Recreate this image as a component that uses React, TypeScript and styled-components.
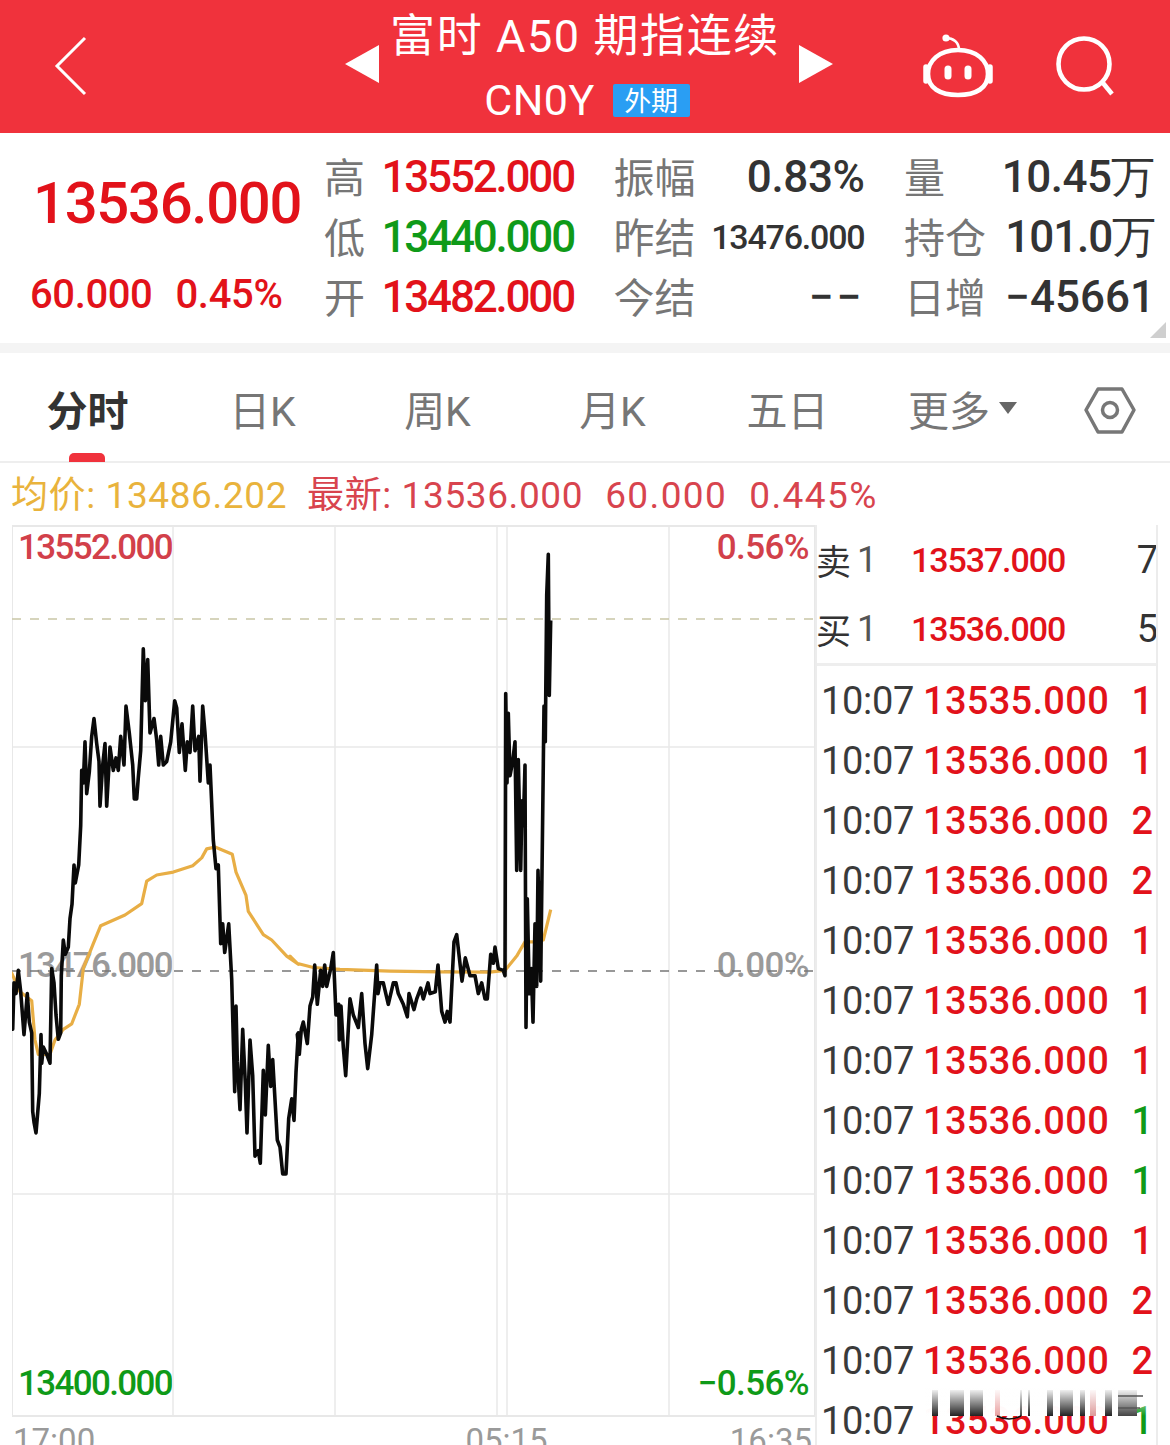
import React from "react";
import styled, { createGlobalStyle } from "styled-components";

const GlobalStyle = createGlobalStyle`
  html, body { margin: 0; padding: 0; background: #fff; width: 1170px; height: 1445px; overflow: hidden; }
  body { font-family: Roboto, "Noto Sans CJK SC", sans-serif; }
  #root { width: 1170px; height: 1445px; overflow: hidden; }
`;

const RED = "#e2121a";
const GREEN = "#0f9a18";
const CJK = `Roboto, "Noto Sans CJK SC", sans-serif`;

const Page = styled.div`
  width: 1170px;
  height: 1445px;
  overflow: hidden;
  background: #fff;
  position: relative;
`;

/* ---------- header ---------- */
const Header = styled.header`
  height: 133px;
  background: #f0323c;
  color: #fff;
  display: flex;
  align-items: flex-start;
`;
const BackIcon = styled.svg`
  width: 34px;
  height: 60px;
  margin: 36px 257px 0 54px;
  flex: none;
`;
const Arrow = styled.div<{ $dir: "left" | "right" }>`
  width: 0;
  height: 0;
  flex: none;
  margin-top: 45px;
  border-top: 19px solid transparent;
  border-bottom: 19px solid transparent;
  ${(p) => (p.$dir === "left" ? "border-right: 34px solid #fff;" : "border-left: 34px solid #fff;")}
`;
const TitleBlock = styled.div`
  width: 420px;
  flex: none;
  display: flex;
  flex-direction: column;
  align-items: center;
`;
const Title = styled.div`
  font-family: ${CJK};
  font-weight: 400;
  font-size: 45px;
  line-height: 70px;
  letter-spacing: 1.6px;
  white-space: pre;
  margin: 2px 8px -2px 0;
`;
const SubRow = styled.div`
  display: flex;
  align-items: center;
  gap: 18px;
  height: 60px;
  margin-right: 4px;
`;
const Code = styled.span`
  font-size: 43px;
  font-weight: 400;
  letter-spacing: 0.4px;
`;
const Badge = styled.span`
  width: 77px;
  height: 33px;
  background: #2a9ef3;
  border-radius: 2px;
  font-family: "Noto Sans CJK SC", sans-serif;
  font-size: 27px;
  font-weight: 400;
  line-height: 32px;
  text-align: center;
`;
const RobotIcon = styled.svg`
  width: 74px;
  height: 70px;
  margin: 30px 0 0 88px;
  flex: none;
`;
const SearchIcon = styled.svg`
  width: 64px;
  height: 64px;
  margin: 34px 0 0 61px;
  flex: none;
`;

/* ---------- stats ---------- */
const Stats = styled.section`
  height: 210px;
  display: flex;
  position: relative;
`;
const PriceBlock = styled.div`
  width: 325px;
  flex: none;
  display: flex;
  flex-direction: column;
`;
const Num = styled.span<{ $size: number; $color?: string; $ls?: number; $w?: number }>`
  font-family: Roboto, sans-serif;
  font-size: ${(p) => p.$size}px;
  color: ${(p) => p.$color ?? "#333"};
  letter-spacing: ${(p) => p.$ls ?? 0}px;
  font-weight: ${(p) => p.$w ?? 400};
  white-space: nowrap;
`;
const BigPrice = styled.div`
  height: 70px;
  line-height: 70px;
  margin: 35px 0 0 33px;
`;
const ChangeRow = styled.div`
  display: flex;
  gap: 23px;
  height: 60px;
  line-height: 60px;
  margin: 27px 0 0 30px;
`;
const StatGrid = styled.div`
  display: grid;
  grid-template-columns: 249px 250px 250px;
  grid-auto-rows: 60px;
  column-gap: 40.5px;
  padding-top: 14px;
`;
const Cell = styled.div`
  display: flex;
  justify-content: space-between;
  align-items: center;
`;
const Label = styled.span`
  font-family: "Noto Sans CJK SC", sans-serif;
  font-size: 41px;
  line-height: 60px;
  margin: -4px 0 0 -1px;
  font-weight: 400;
  color: #767676;
  white-space: nowrap;
`;
const Corner = styled.div`
  position: absolute;
  right: 4px;
  bottom: 5px;
  width: 0;
  height: 0;
  border-left: 16px solid transparent;
  border-bottom: 16px solid #cfcfcf;
`;
const Band = styled.div`
  height: 10px;
  background: #f4f4f4;
`;

/* ---------- tabs ---------- */
const Tabs = styled.nav`
  height: 108px;
  display: flex;
  border-bottom: 2px solid #eeeeee;
`;
const Tab = styled.div<{ $active?: boolean }>`
  width: 175px;
  flex: none;
  position: relative;
  display: flex;
  justify-content: center;
  align-items: center;
  height: 110px;
  font-family: ${CJK};
  font-size: 41px;
  font-weight: ${(p) => (p.$active ? 700 : 400)};
  color: ${(p) => (p.$active ? "#333" : "#767676")};
  &::after {
    content: "";
    display: ${(p) => (p.$active ? "block" : "none")};
    position: absolute;
    left: 69px;
    bottom: 1px;
    width: 36px;
    height: 9px;
    border-radius: 5px 5px 0 0;
    background: #f0323c;
  }
`;
const Caret = styled.i`
  width: 0;
  height: 0;
  margin: 0 0 0 9px;
  border-left: 9px solid transparent;
  border-right: 9px solid transparent;
  border-top: 12px solid #666;
`;
const HexIcon = styled.svg`
  width: 54px;
  height: 50px;
  margin: 33px 0 0 33px;
  flex: none;
`;

/* ---------- legend ---------- */
const Legend = styled.div`
  height: 62px;
  display: flex;
  align-items: baseline;
  padding: 9px 0 0 11px;
  box-sizing: border-box;
  font-family: ${CJK};
  font-size: 37px;
  line-height: 48px;
  font-weight: 400;
  white-space: pre;
`;
const LegendItem = styled.span<{ $color: string; $gap?: number; $ls?: number }>`
  color: ${(p) => p.$color};
  margin-left: ${(p) => p.$gap ?? 0}px;
  letter-spacing: ${(p) => p.$ls ?? 0.6}px;
`;

/* ---------- main ---------- */
const Main = styled.div`
  display: flex;
  align-items: flex-start;
`;
const ChartColumn = styled.div`
  width: 815px;
  flex: none;
`;
const ChartBox = styled.div`
  position: relative;
  width: 803px;
  height: 892px;
  margin-left: 12px;
`;
const ChartSvg = styled.svg`
  display: block;
  position: relative;
  z-index: 1;
`;
const ChartLabel = styled.span<{
  $color: string;
  $top: number;
  $left?: number;
  $right?: number;
}>`
  position: absolute;
  top: ${(p) => p.$top}px;
  ${(p) => (p.$left !== undefined ? `left: ${p.$left}px;` : "")}
  ${(p) => (p.$right !== undefined ? `right: ${p.$right}px;` : "")}
  color: ${(p) => p.$color};
  font-size: 35px;
  font-weight: 500;
  line-height: 40px;
  letter-spacing: ${(p) => (p.$left !== undefined ? -1.65 : -0.6)}px;
  z-index: 0;
`;
const Axis = styled.div`
  display: flex;
  justify-content: space-between;
  padding: 0 3px 0 13px;
  height: 28px;
  font-size: 33px;
  line-height: 48px;
  color: #9a9a9a;
  font-weight: 400;
`;
const AxisMid = styled.span`
  margin-left: 188px;
`;

const Side = styled.aside`
  width: 343px;
  flex: none;
  box-sizing: border-box;
  height: 920px;
  border-left: 2px solid #ececec;
  border-right: 2px solid #ececec;
  overflow: hidden;
`;
const QuoteBox = styled.div`
  height: 138px;
  border-bottom: 3px solid #eeeeee;
`;
const Quote = styled.div`
  height: 69px;
  display: flex;
  align-items: center;
  margin: 0 -2px 0 -1px;
`;
const QuoteLabel = styled.span`
  width: 95px;
  flex: none;
  display: flex;
  align-items: center;
  gap: 6px;
  font-family: "Noto Sans CJK SC", sans-serif;
  font-size: 35px;
  font-weight: 400;
  color: #333;
`;
const QuoteIndex = styled.span`
  font-family: Roboto, sans-serif;
  font-weight: 400;
  font-size: 36px;
  color: #555;
`;
const QuotePrice = styled(Num)`
  flex: 1;
`;
const TickList = styled.div`
  padding-top: 5px;
`;
const Tick = styled.div`
  height: 60px;
  display: flex;
  align-items: center;
  padding: 0 3px 0 4px;
  font-size: 38px;
  font-weight: 500;
  white-space: nowrap;
`;
const TickTime = styled.span`
  width: 102px;
  flex: none;
  color: #3a3a3a;
  font-weight: 400;
  letter-spacing: -0.3px;
`;
const TickPrice = styled.span`
  flex: 1;
  color: ${RED};
  letter-spacing: 0.3px;
`;
const TickQty = styled.span<{ $up: boolean }>`
  color: ${(p) => (p.$up ? RED : GREEN)};
`;
const Watermark = styled.svg`
  position: absolute;
  left: 925px;
  top: 1386px;
  z-index: 3;
  filter: blur(0.6px);
`;

/* ---------- data ---------- */
type P = [number, number];
const z3 = (a: P[]) => a.map(([x, y]) => [x / 3, 640 + y / 2.8] as P);
const z4 = (a: P[]) => a.map(([x, y]) => [290 + x / 3, 540 + y / 2.8] as P);
const toPts = (a: P[]) => a.map(([x, y]) => `${x.toFixed(1)},${y.toFixed(1)}`).join(" ");

const blackA: P[] = [[34,1000],[38,1090],[42,960],[48,990],[55,925],[62,985],[72,1105],[82,990],[88,1070],[95,1100],[98,1320],[102,1350],[108,1380],[118,1270],[123,1105],[125,1185],[130,1140],[140,1160],[150,1185],[155,920],[162,960],[168,1050],[175,1118],[182,1100],[184,940],[190,840],[196,880],[205,860],[210,780],[216,740],[222,630],[226,680],[236,630],[242,520],[245,365],[250,400],[255,285],[260,430],[268,370],[275,270],[282,220],[290,290],[297,340],[300,465],[308,350],[315,290],[320,465],[330,300],[340,365],[348,330],[355,365],[362,270],[372,350],[378,185],[388,260],[398,350],[403,445],[410,445],[415,385],[422,310],[430,25],[436,170],[443,55],[450,260],[462,220],[470,280],[476,350],[482,270],[490,350],[500,340],[512,285],[524,170],[530,190],[538,315],[546,235],[556,365],[562,285],[570,315],[578,185],[585,310],[596,270],[600,395],[608,185],[615,260],[625,400],[630,350],[640,560],[648,640],[655,630],[662,850],[668,795],[674,875],[686,795],[695,950],[704,1265],[708,1025],[712,1180],[720,1315],[728,1090],[736,1240],[741,1380],[750,1120],[758,1220],[765,1445],[775,1430],[781,1465],[790,1205],[796,1330],[805,1135],[812,1250],[818,1175],[832,1400],[840,1420],[848,1495],[858,1495],[866,1340],[875,1285],[882,1345],[888,1210],[895,1100]];
const blackB: P[] = [[22,1385],[28,1440],[34,1370],[40,1350],[52,1410],[60,1305],[68,1280],[74,1190],[82,1300],[92,1205],[98,1250],[104,1190],[110,1250],[122,1200],[130,1155],[138,1330],[146,1300],[148,1400],[153,1305],[160,1420],[167,1500],[180,1285],[190,1330],[205,1365],[215,1270],[225,1410],[233,1480],[245,1385],[260,1190],[264,1270],[270,1240],[280,1240],[295,1300],[310,1240],[318,1240],[325,1270],[340,1300],[352,1335],[357,1270],[372,1315],[380,1285],[392,1255],[400,1285],[414,1240],[420,1270],[436,1265],[444,1190],[455,1320],[465,1350],[472,1320],[480,1350],[492,1125],[500,1105],[516,1235],[526,1170],[540,1220],[555,1220],[565,1270],[575,1240],[585,1285],[592,1285],[602,1160],[610,1185],[615,1140],[625,1200],[640,1205],[645,1220],[647,430],[651,680],[655,485],[660,660],[668,620],[675,565],[680,925],[685,615],[692,925],[696,730],[700,800],[705,630],[708,1365],[712,1005],[718,1270],[724,1200],[729,1350],[735,1075],[740,1250],[744,925],[752,1235],[762,465],[766,565],[770,155],[775,40],[778,435],[782,225]];
const goldA: P[] = [[34,930],[60,985],[95,1010],[105,1120],[115,1160],[150,1160],[165,1120],[190,1090],[215,1075],[238,1020],[250,920],[280,850],[302,800],[375,770],[425,738],[440,675],[470,658],[520,650],[578,632],[605,610],[620,585],[645,580],[697,600],[708,650],[738,715],[745,760],[790,825],[815,840],[860,885],[895,908]];
const goldB: P[] = [[0,1165],[20,1185],[70,1197],[150,1202],[300,1207],[450,1209],[600,1210],[645,1205],[680,1165],[705,1125],[730,1125],[760,1120],[782,1035]];
const blackPts = toPts([...z3(blackA), ...z4(blackB)]);
const goldPts = toPts([...z3(goldA), ...z4(goldB)]);

const VLINES = [173, 335, 497, 507, 669];
const HLINES = [747, 1194];
const ROWS: { price: string; qty: string; up: boolean }[] = [
  { price: "13535.000", qty: "1", up: true },
  { price: "13536.000", qty: "1", up: true },
  { price: "13536.000", qty: "2", up: true },
  { price: "13536.000", qty: "2", up: true },
  { price: "13536.000", qty: "1", up: true },
  { price: "13536.000", qty: "1", up: true },
  { price: "13536.000", qty: "1", up: true },
  { price: "13536.000", qty: "1", up: false },
  { price: "13536.000", qty: "1", up: false },
  { price: "13536.000", qty: "1", up: true },
  { price: "13536.000", qty: "2", up: true },
  { price: "13536.000", qty: "2", up: true },
  { price: "13536.000", qty: "1", up: false },
];

const BARS: [number, number, string][] = [
  [7, 6, "#222"], [25, 14, "#222"], [45, 13, "#222"], [70, 5, "#e9a0a0"], [95, 2, "#444"],
  [103, 2, "#222"], [122, 6, "#222"], [135, 13, "#222"], [155, 5, "#222"], [165, 6, "#d99"],
  [180, 7, "#222"], [193, 19, "#444"],
];

export default function App() {
  return (
    <Page>
      <GlobalStyle />
      <Header>
        <BackIcon viewBox="0 0 34 60">
          <path d="M31 2 L3 30 L31 58" fill="none" stroke="#fff" strokeWidth="3" />
        </BackIcon>
        <Arrow $dir="left" />
        <TitleBlock>
          <Title>富时 A50 期指连续</Title>
          <SubRow>
            <Code>CN0Y</Code>
            <Badge>外期</Badge>
          </SubRow>
        </TitleBlock>
        <Arrow $dir="right" />
        <RobotIcon viewBox="0 0 74 70">
          <circle cx="25" cy="8" r="3.6" fill="#fff" />
          <path d="M25 8 C32 8 38 12 38 20" fill="none" stroke="#fff" strokeWidth="2.6" />
          <path d="M37 20 C56 20 67 31 67 44 C67 58 55 65 37 65 C19 65 7 58 7 44 C7 31 18 20 37 20 Z" fill="none" stroke="#fff" strokeWidth="4.6" />
          <path d="M5 37 V51 M69 37 V51" fill="none" stroke="#fff" strokeWidth="5.5" strokeLinecap="round" />
          <rect x="23.5" y="35.5" width="7" height="14" rx="3.5" fill="#fff" />
          <rect x="43.5" y="35.5" width="7" height="14" rx="3.5" fill="#fff" />
        </RobotIcon>
        <SearchIcon viewBox="0 0 64 64">
          <circle cx="28" cy="30" r="25.5" fill="none" stroke="#fff" strokeWidth="4.6" />
          <path d="M47 49 L56 60" fill="none" stroke="#fff" strokeWidth="4.6" />
        </SearchIcon>
      </Header>

      <Stats>
        <PriceBlock>
          <BigPrice>
            <Num $size={58} $color={RED} $ls={-1.3} $w={500}>13536.000</Num>
          </BigPrice>
          <ChangeRow>
            <Num $size={40} $color={RED} $ls={-0.4} $w={500}>60.000</Num>
            <Num $size={40} $color={RED} $ls={-0.3} $w={500}>0.45%</Num>
          </ChangeRow>
        </PriceBlock>
        <StatGrid>
          <Cell><Label>高</Label><Num $size={44} $color={RED} $ls={-2.2} $w={500}>13552.000</Num></Cell>
          <Cell><Label>振幅</Label><Num $size={44} $ls={-0.4} $w={500}>0.83%</Num></Cell>
          <Cell><Label>量</Label><Num $size={44} $ls={-0.5} $w={500}>10.45万</Num></Cell>
          <Cell><Label>低</Label><Num $size={44} $color={GREEN} $ls={-2.2} $w={500}>13440.000</Num></Cell>
          <Cell><Label>昨结</Label><Num $size={34} $ls={-1.2} $w={500}>13476.000</Num></Cell>
          <Cell><Label>持仓</Label><Num $size={44} $ls={-1.1} $w={500}>101.0万</Num></Cell>
          <Cell><Label>开</Label><Num $size={44} $color={RED} $ls={-2.2} $w={500}>13482.000</Num></Cell>
          <Cell><Label>今结</Label><Num $size={44} $w={500} $ls={3}>−−</Num></Cell>
          <Cell><Label>日增</Label><Num $size={44} $ls={0} $w={500}>−45661</Num></Cell>
        </StatGrid>
        <Corner />
      </Stats>
      <Band />

      <Tabs>
        <Tab $active>分时</Tab>
        <Tab>日K</Tab>
        <Tab>周K</Tab>
        <Tab>月K</Tab>
        <Tab>五日</Tab>
        <Tab>更多<Caret /></Tab>
        <HexIcon viewBox="0 0 54 50">
          <path d="M3 24 L15 3 L39 3 L51 24 L39 46 L15 46 Z" fill="none" stroke="#777" strokeWidth="3.5" strokeLinejoin="round" />
          <circle cx="27" cy="24" r="7.5" fill="none" stroke="#777" strokeWidth="3.5" />
        </HexIcon>
      </Tabs>

      <Legend>
        <LegendItem $color="#e9b33c">均价: 13486.202</LegendItem>
        <LegendItem $color="#d8444e" $gap={20}>最新: 13536.000</LegendItem>
        <LegendItem $color="#d8444e" $gap={22} $ls={1.4}>60.000</LegendItem>
        <LegendItem $color="#d8444e" $gap={22} $ls={1.4}>0.445%</LegendItem>
      </Legend>

      <Main>
        <ChartColumn>
          <ChartBox>
            <ChartLabel $color="#d2404a" $top={3} $left={6}>13552.000</ChartLabel>
            <ChartLabel $color="#d2404a" $top={3} $right={6}>0.56%</ChartLabel>
            <ChartLabel $color="#9a9a9a" $top={421} $left={6}>13476.000</ChartLabel>
            <ChartLabel $color="#9a9a9a" $top={421} $right={6}>0.00%</ChartLabel>
            <ChartLabel $color={GREEN} $top={839} $left={6}>13400.000</ChartLabel>
            <ChartLabel $color={GREEN} $top={839} $right={6}>−0.56%</ChartLabel>
            <ChartSvg width="803" height="892" viewBox="12 525 803 892">
              <rect x="12" y="526" width="803" height="890" fill="none" stroke="#e8e8e8" strokeWidth="2" />
              {VLINES.map((x) => (
                <line key={x} x1={x} x2={x} y1={526} y2={1416} stroke="#e8e8e8" strokeWidth="1.5" />
              ))}
              {HLINES.map((y) => (
                <line key={y} x1={12} x2={815} y1={y} y2={y} stroke="#e8e8e8" strokeWidth="1.5" />
              ))}
              <line x1={12} x2={815} y1={619} y2={619} stroke="#c9c6a6" strokeWidth="1.5" strokeDasharray="9 9" />
              <line x1={12} x2={815} y1={971} y2={971} stroke="#777" strokeWidth="1.5" strokeDasharray="9 9" />
              <polyline points={goldPts} fill="none" stroke="#e8ae45" strokeWidth="3.2" strokeLinejoin="round" />
              <polyline points={blackPts} fill="none" stroke="#0a0a0a" strokeWidth="3.6" strokeLinejoin="round" />
            </ChartSvg>
          </ChartBox>
          <Axis>
            <span>17:00</span>
            <AxisMid>05:15</AxisMid>
            <span>16:35</span>
          </Axis>
        </ChartColumn>

        <Side>
          <QuoteBox>
            <Quote>
              <QuoteLabel>卖<QuoteIndex>1</QuoteIndex></QuoteLabel>
              <QuotePrice $size={34} $color={RED} $ls={-1.1} $w={500}>13537.000</QuotePrice>
              <Num $size={38}>7</Num>
            </Quote>
            <Quote>
              <QuoteLabel>买<QuoteIndex>1</QuoteIndex></QuoteLabel>
              <QuotePrice $size={34} $color={RED} $ls={-1.1} $w={500}>13536.000</QuotePrice>
              <Num $size={38}>5</Num>
            </Quote>
          </QuoteBox>
          <TickList>
            {ROWS.map((r, i) => (
              <Tick key={i}>
                <TickTime>10:07</TickTime>
                <TickPrice>{r.price}</TickPrice>
                <TickQty $up={r.up}>{r.qty}</TickQty>
              </Tick>
            ))}
          </TickList>
        </Side>
      </Main>

      <Watermark width="225" height="40" viewBox="0 0 225 40">
        <defs>
          <linearGradient id="veil" x1="0" y1="0" x2="0" y2="1">
            <stop offset="0" stopColor="#fff" stopOpacity="0.9" />
            <stop offset="1" stopColor="#fff" stopOpacity="1" />
          </linearGradient>
          <linearGradient id="fade" x1="0" y1="0" x2="0" y2="1">
            <stop offset="0" stopColor="#fff" stopOpacity="1" />
            <stop offset="1" stopColor="#fff" stopOpacity="0" />
          </linearGradient>
        </defs>
        <rect x="0" y="2" width="190" height="28" fill="url(#veil)" />
        {BARS.map(([x, w, c]) => (
          <rect key={x} x={x} y={4} width={w} height={26} fill={c} />
        ))}
        <rect x="0" y="2" width="225" height="28" fill="url(#fade)" />
        <path d="M72 30 Q84 36 96 30" fill="none" stroke="#111" strokeWidth="1.5" />
        <path d="M193 10 H218 M193 22 H215" stroke="#555" strokeWidth="1.5" />
      </Watermark>
    </Page>
  );
}
